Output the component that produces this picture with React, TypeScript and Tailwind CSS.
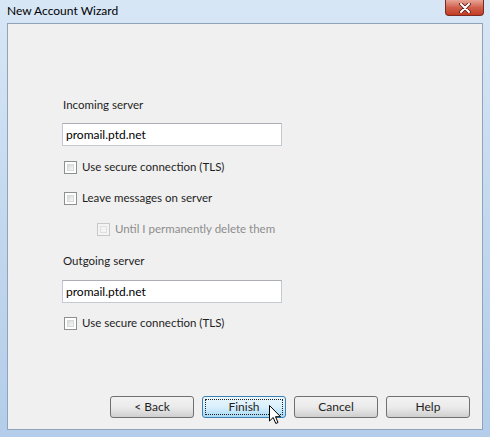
import React from "react";

function CheckBox({ disabled = false }: { disabled?: boolean }) {
	return (
		<span
			className={
				"inline-block w-[13px] h-[13px] border p-[2px] " +
				(disabled ? "border-[#c8c8c8] bg-[#f4f4f4]" : "border-[#8e8f8f] bg-white")
			}
		>
			<span
				className={
					"block w-full h-full border " +
					(disabled
						? "border-[#e0e0e0] bg-[#f4f4f4]"
						: "border-[#d8d8d8] bg-gradient-to-br from-[#d6d9de] to-[#f8f8f8]")
				}
			/>
		</span>
	);
}

function Option({ label, disabled = false }: { label: string; disabled?: boolean }) {
	return (
		<div className="flex items-center gap-[5px] h-[14px]">
			<CheckBox disabled={disabled} />
			<span className={disabled ? "text-[#8d8d8d]" : "text-[#1e1e1e]"}>{label}</span>
		</div>
	);
}

function ServerField({ value }: { value: string }) {
	return (
		<div className="w-[220px] h-[23px] bg-white border border-[#c5cad2] border-t-[#abadb3] flex items-center px-[3px] text-black text-[12px]">
			{value}
		</div>
	);
}

function WizButton({ label, active = false }: { label: string; active?: boolean }) {
	return (
		<button
			className={
				"w-[84px] h-[22px] rounded-[3px] border p-[2px] " +
				(active
					? "border-[#3c7fb1] bg-gradient-to-b from-[#eaf6fd] via-[#d9f0fc] to-[#a7d9f5]"
					: "border-[#707070] bg-gradient-to-b from-[#f2f2f2] via-[#ebebeb] to-[#cfcfcf]")
			}
		>
			<span
				className={
					"flex items-center justify-center w-full h-full text-[#1e1e1e] " +
					(active ? "border border-dotted border-[#202020]" : "")
				}
			>
				{label}
			</span>
		</button>
	);
}

export default function App() {
	return (
		<div
			className="w-[490px] h-[437px] flex flex-col bg-gradient-to-b from-[#d8e7f6] via-[#c3d8ee] to-[#b3cdea] text-[11.5px] overflow-hidden"
			style={{ fontFamily: 'Lato, "Noto Sans", sans-serif' }}
		>
			{/* Title bar */}
			<div className="h-[23px] flex items-start justify-between pl-[7px] pr-[6px]">
				<span className="mt-[3px] text-black leading-[16px] text-[12px]">New Account Wizard</span>
				<div className="w-[39px] h-[16px] rounded-b-[4px] border border-t-0 border-[#7a2a22] bg-gradient-to-b from-[#e7a496] via-[#d0604c] to-[#c23b22] flex items-center justify-center">
					<svg width="12" height="10" viewBox="0 0 12 10">
						<path d="M2 1 L10 9 M10 1 L2 9" stroke="#5a1a12" strokeWidth="3.6" strokeLinecap="round" />
						<path d="M2 1 L10 9 M10 1 L2 9" stroke="#ffffff" strokeWidth="2" strokeLinecap="round" />
					</svg>
				</div>
			</div>

			{/* Frame */}
			<div className="flex-1 px-[7px] pb-[7px] flex">
				<div className="flex-1 flex flex-col border border-[#8fa3bb] bg-[#f0f0f0] pl-[54px] pr-[12px] pt-[73px] pb-[11px]">
					<div className="flex flex-col">
						<div className="text-[#1e1e1e] h-[16px] leading-[16px] ml-[1px]">Incoming server</div>
						<div className="mt-[10px]">
							<ServerField value="promail.ptd.net" />
						</div>
						<div className="mt-[14px] ml-[2px] flex flex-col gap-[17px]">
							<Option label="Use secure connection (TLS)" />
							<Option label="Leave messages on server" />
							<div className="ml-[33px]">
								<Option label="Until I permanently delete them" disabled />
							</div>
						</div>
						<div className="mt-[17px] text-[#1e1e1e] h-[16px] leading-[16px] ml-[1px]">Outgoing server</div>
						<div className="mt-[11px]">
							<ServerField value="promail.ptd.net" />
						</div>
						<div className="mt-[13px] ml-[2px]">
							<Option label="Use secure connection (TLS)" />
						</div>
					</div>

					<div className="mt-auto flex justify-end gap-[8px] text-[12px]">
						<WizButton label="< Back" />
						<div className="relative">
							<WizButton label="Finish" active />
							<svg
								className="absolute left-[67px] top-[9px]"
								width="13"
								height="20"
								viewBox="0 0 13 20"
							>
								<path
									d="M0.5 0.5 L0.5 16 L4.2 12.5 L6.8 18.5 L9 17.5 L6.5 11.7 L11.5 11.7 Z"
									fill="#ffffff"
									stroke="#000000"
									strokeWidth="1"
									strokeLinejoin="round"
								/>
							</svg>
						</div>
						<WizButton label="Cancel" />
						<WizButton label="Help" />
					</div>
				</div>
			</div>
		</div>
	);
}
